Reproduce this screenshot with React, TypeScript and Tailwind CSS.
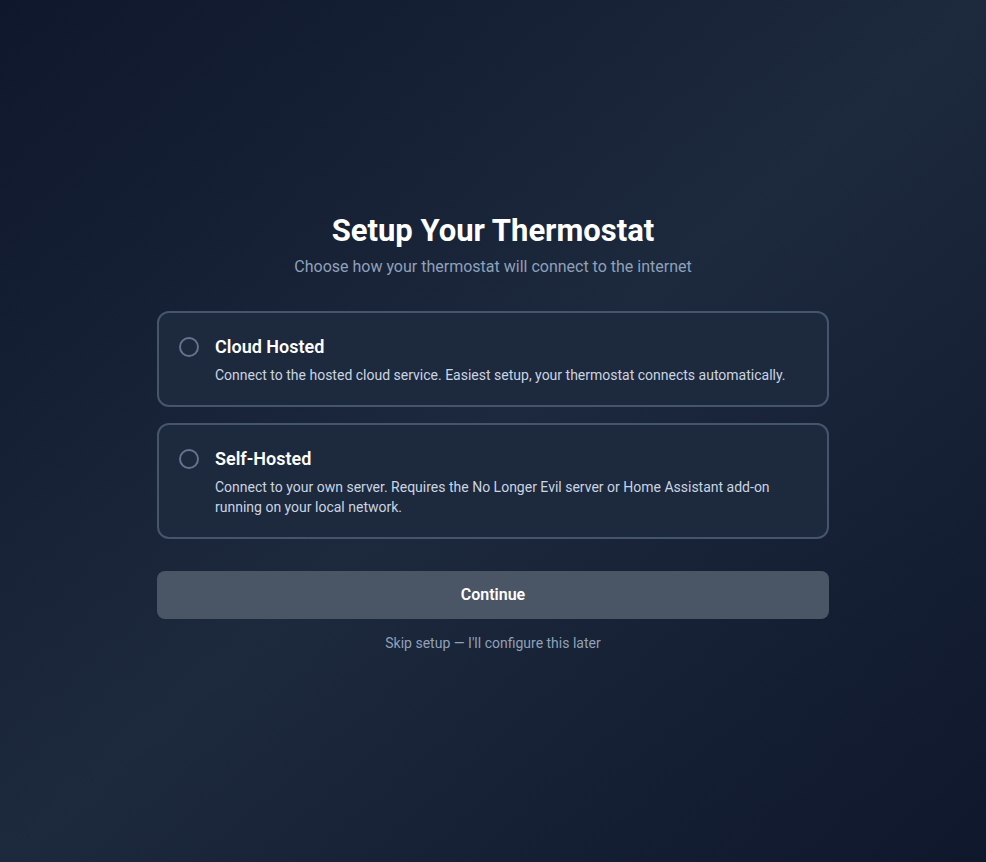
import { useState } from "react";

type Mode = "cloud" | "self";

const options: { id: Mode; title: string; description: string }[] = [
  {
    id: "cloud",
    title: "Cloud Hosted",
    description:
      "Connect to the hosted cloud service. Easiest setup, your thermostat connects automatically.",
  },
  {
    id: "self",
    title: "Self-Hosted",
    description:
      "Connect to your own server. Requires the No Longer Evil server or Home Assistant add-on running on your local network.",
  },
];

export default function App() {
  const [mode, setMode] = useState<Mode | null>(null);

  return (
    <div className="flex min-h-screen items-center justify-center bg-gradient-to-br from-slate-900 via-slate-800 to-slate-900 px-4 pt-1.5 font-['Roboto','Segoe_UI',sans-serif]">
      <div className="w-full max-w-2xl">
        <div className="mb-8 text-center">
          <h1 className="text-[31px] leading-9 font-bold text-white">Setup Your Thermostat</h1>
          <p className="mt-1.5 text-base text-slate-400">
            Choose how your thermostat will connect to the internet
          </p>
        </div>

        <div className="space-y-4">
          {options.map((opt) => {
            const active = mode === opt.id;
            return (
              <button
                key={opt.id}
                type="button"
                onClick={() => setMode(opt.id)}
                className={`flex w-full items-start gap-4 rounded-xl border-2 bg-slate-800 p-5 text-left transition-colors ${
                  active ? "border-blue-500" : "border-slate-600 hover:border-slate-500"
                }`}
              >
                <span
                  className={`mt-1 flex h-5 w-5 shrink-0 items-center justify-center rounded-full border-2 ${
                    active ? "border-blue-500" : "border-slate-500"
                  }`}
                >
                  {active && <span className="h-2.5 w-2.5 rounded-full bg-blue-500" />}
                </span>
                <span className="flex-1">
                  <span className="block text-lg font-semibold text-white">{opt.title}</span>
                  <span className="mt-1 block text-sm text-slate-300">{opt.description}</span>
                </span>
              </button>
            );
          })}
        </div>

        <button
          type="button"
          disabled={!mode}
          className="mt-8 w-full rounded-lg bg-gray-600 py-3 font-semibold text-white disabled:cursor-not-allowed"
        >
          Continue
        </button>

        <div className="mt-3 text-center">
          <button type="button" className="text-sm text-slate-400 hover:text-slate-300">
            Skip setup — I'll configure this later
          </button>
        </div>
      </div>
    </div>
  );
}
